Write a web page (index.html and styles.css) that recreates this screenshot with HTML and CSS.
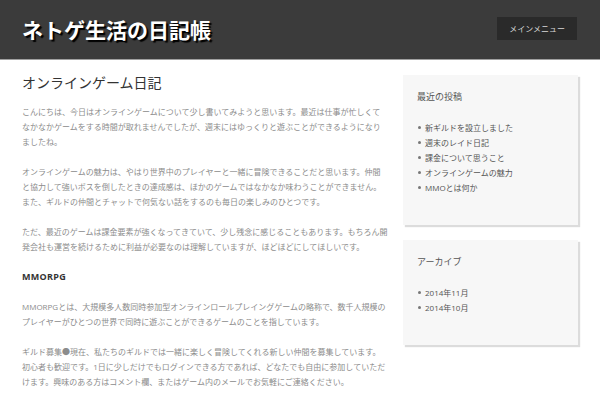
FILE: index.html
```html
<!DOCTYPE html>
<html lang="ja">
<head>
<meta charset="utf-8">
<title>ネトゲ生活の日記帳</title>
<link rel="stylesheet" href="styles.css">
</head>
<body>
<header class="site-header">
  <h1 class="site-title">ネトゲ生活の日記帳</h1>
  <button class="menu-toggle">メインメニュー</button>
</header>
<div class="page">
  <main class="content">
    <h2 class="entry-title">オンラインゲーム日記</h2>
    <p>こんにちは、今日はオンラインゲームについて少し書いてみようと思います。最近は仕事が忙しくてなかなかゲームをする時間が取れませんでしたが、週末にはゆっくりと遊ぶことができるようになりましたね。</p>
    <p>オンラインゲームの魅力は、やはり世界中のプレイヤーと一緒に冒険できることだと思います。仲間と協力して強いボスを倒したときの達成感は、ほかのゲームではなかなか味わうことができません。また、ギルドの仲間とチャットで何気ない話をするのも毎日の楽しみのひとつです。</p>
    <p>ただ、最近のゲームは課金要素が強くなってきていて、少し残念に感じることもあります。もちろん開発会社も運営を続けるために利益が必要なのは理解していますが、ほどほどにしてほしいです。</p>
    <h3 class="entry-heading">MMORPG</h3>
    <p>MMORPGとは、大規模多人数同時参加型オンラインロールプレイングゲームの略称で、数千人規模のプレイヤーがひとつの世界で同時に遊ぶことができるゲームのことを指しています。</p>
    <p>ギルド募集●現在、私たちのギルドでは一緒に楽しく冒険してくれる新しい仲間を募集しています。初心者も歓迎です。1日に少しだけでもログインできる方であれば、どなたでも自由に参加していただけます。興味のある方はコメント欄、またはゲーム内のメールでお気軽にご連絡ください。</p>
  </main>
  <aside class="sidebar">
    <section class="widget">
      <h4 class="widget-title">最近の投稿</h4>
      <ul class="widget-list">
        <li>新ギルドを設立しました</li>
        <li>週末のレイド日記</li>
        <li>課金について思うこと</li>
        <li>オンラインゲームの魅力</li>
        <li>MMOとは何か</li>
      </ul>
    </section>
    <section class="widget">
      <h4 class="widget-title">アーカイブ</h4>
      <ul class="widget-list">
        <li>2014年11月</li>
        <li>2014年10月</li>
      </ul>
    </section>
  </aside>
</div>
</body>
</html>
```

FILE: styles.css
```css
* { box-sizing: border-box; }

html, body {
  margin: 0;
  padding: 0;
  background: #ffffff;
  font-family: "Open Sans", "Noto Sans CJK JP", sans-serif;
}

.site-header {
  height: 60px;
  background: #3b3b3b;
  border-bottom: 1px solid #a0a0a0;
  display: flex;
  align-items: center;
  justify-content: space-between;
  padding: 0 23px 1px 22px;
}

.site-title {
  margin: 2px 0 0 0;
  font-size: 21px;
  line-height: 26px;
  font-weight: bold;
  color: #ffffff;
  text-shadow: 2px 2px 1px #000000;
}

.menu-toggle {
  height: 23px;
  padding: 0 12px;
  margin-top: -1px;
  border: none;
  background: #2a2a2a;
  color: #d8d8d8;
  font-family: inherit;
  font-size: 8px;
  line-height: 23px;
}

.page {
  display: flex;
  gap: 15px;
  padding: 0 22px;
}

.content {
  flex: 0 0 366px;
  padding-top: 13px;
  font-size: 8px;
  line-height: 15px;
  color: #8c8c8c;
}

.entry-title {
  margin: 0 0 11px 0;
  font-size: 14px;
  line-height: 20px;
  font-weight: normal;
  color: #333333;
}

.content p {
  margin: 0 0 15px 0;
}

.entry-heading {
  margin: 0 0 15px 0;
  font-size: 9px;
  line-height: 15px;
  font-weight: bold;
  letter-spacing: 0.3px;
  color: #333333;
}

.sidebar {
  flex: 0 0 175px;
  padding-top: 15px;
  display: flex;
  flex-direction: column;
  gap: 15px;
}

.widget {
  background: #f7f7f7;
  box-shadow: 2px 2px 1px #dcdcdc;
  padding: 14px 14px 30px 14px;
}

.widget-title {
  margin: 0 0 15px 0;
  font-size: 9px;
  line-height: 16px;
  font-weight: normal;
  color: #555555;
}

.widget-list {
  list-style: none;
  margin: 0;
  padding: 0;
  font-size: 8px;
  line-height: 15px;
  color: #555555;
}

.widget-list li {
  display: flex;
  align-items: center;
}

.widget-list li::before {
  content: "";
  width: 3px;
  height: 3px;
  border-radius: 50%;
  background: #777777;
  margin: 0 4px 0 1px;
  flex: 0 0 auto;
}
```
